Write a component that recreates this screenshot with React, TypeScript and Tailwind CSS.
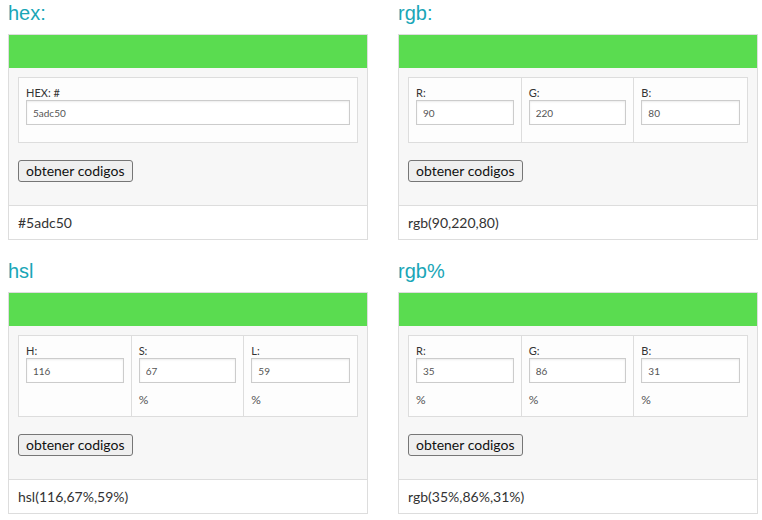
const GREEN = "#5adc50";

type Field = { label: string; value: string; pct?: boolean };

function FieldCell({ f }: { f: Field }) {
  return (
    <div className="px-[7px] pt-[8px] pb-[8px]">
      <label className="block text-[11px] leading-[14px] text-[#333]">{f.label}</label>
      <input
        readOnly
        value={f.value}
        className="block w-full h-[25px] mb-[9px] px-[6px] border border-[#ccc] shadow-[inset_0_1px_2px_rgba(0,0,0,0.08)] bg-white text-[10px] text-[#555] outline-none"
      />
      {f.pct && <div className="text-[12px] leading-[16px] text-[#555]">%</div>}
    </div>
  );
}

function Converter({
  title,
  fields,
  result,
}: {
  title: string;
  fields: Field[];
  result: string;
}) {
  return (
    <section className="w-[360px]">
      <h2 className="mt-[2px] mb-[10px] font-['Liberation_Sans',Arial,sans-serif] text-[20px] leading-[22px] text-[#1aa6b7]">
        {title}
      </h2>
      <div className="border border-[#ddd]">
        <div className="h-[33px]" style={{ backgroundColor: GREEN }} />
        <div className="bg-[#f7f7f7] px-[9px] pt-[9px] pb-[23px]">
          <div
            className={
              fields.length > 1
                ? "grid grid-cols-3 divide-x divide-[#ddd] border border-[#ddd] bg-[#fdfdfd]"
                : "border border-[#ddd] bg-[#fdfdfd]"
            }
          >
            {fields.map((f) => (
              <FieldCell key={f.label} f={f} />
            ))}
          </div>
          <button className="block mt-[17px] h-[22px] px-[7px] rounded-[3px] border border-[#767676] bg-[#efefef] text-[14px] leading-[18px] text-[#111]">
            obtener codigos
          </button>
        </div>
        <div className="border-t border-[#ddd] bg-white px-[9px] py-[8px] text-[14px] leading-[17px] text-[#333]">
          {result}
        </div>
      </div>
    </section>
  );
}

export default function App() {
  return (
    <div className="min-h-screen bg-white pl-2 font-['Lato','Open_Sans',sans-serif]">
      <div className="flex gap-[30px]">
        <Converter title="hex:" fields={[{ label: "HEX: #", value: "5adc50" }]} result="#5adc50" />
        <Converter
          title="rgb:"
          fields={[
            { label: "R:", value: "90" },
            { label: "G:", value: "220" },
            { label: "B:", value: "80" },
          ]}
          result="rgb(90,220,80)"
        />
      </div>
      <div className="mt-[18px] flex gap-[30px]">
        <Converter
          title="hsl"
          fields={[
            { label: "H:", value: "116" },
            { label: "S:", value: "67", pct: true },
            { label: "L:", value: "59", pct: true },
          ]}
          result="hsl(116,67%,59%)"
        />
        <Converter
          title="rgb%"
          fields={[
            { label: "R:", value: "35", pct: true },
            { label: "G:", value: "86", pct: true },
            { label: "B:", value: "31", pct: true },
          ]}
          result="rgb(35%,86%,31%)"
        />
      </div>
    </div>
  );
}
